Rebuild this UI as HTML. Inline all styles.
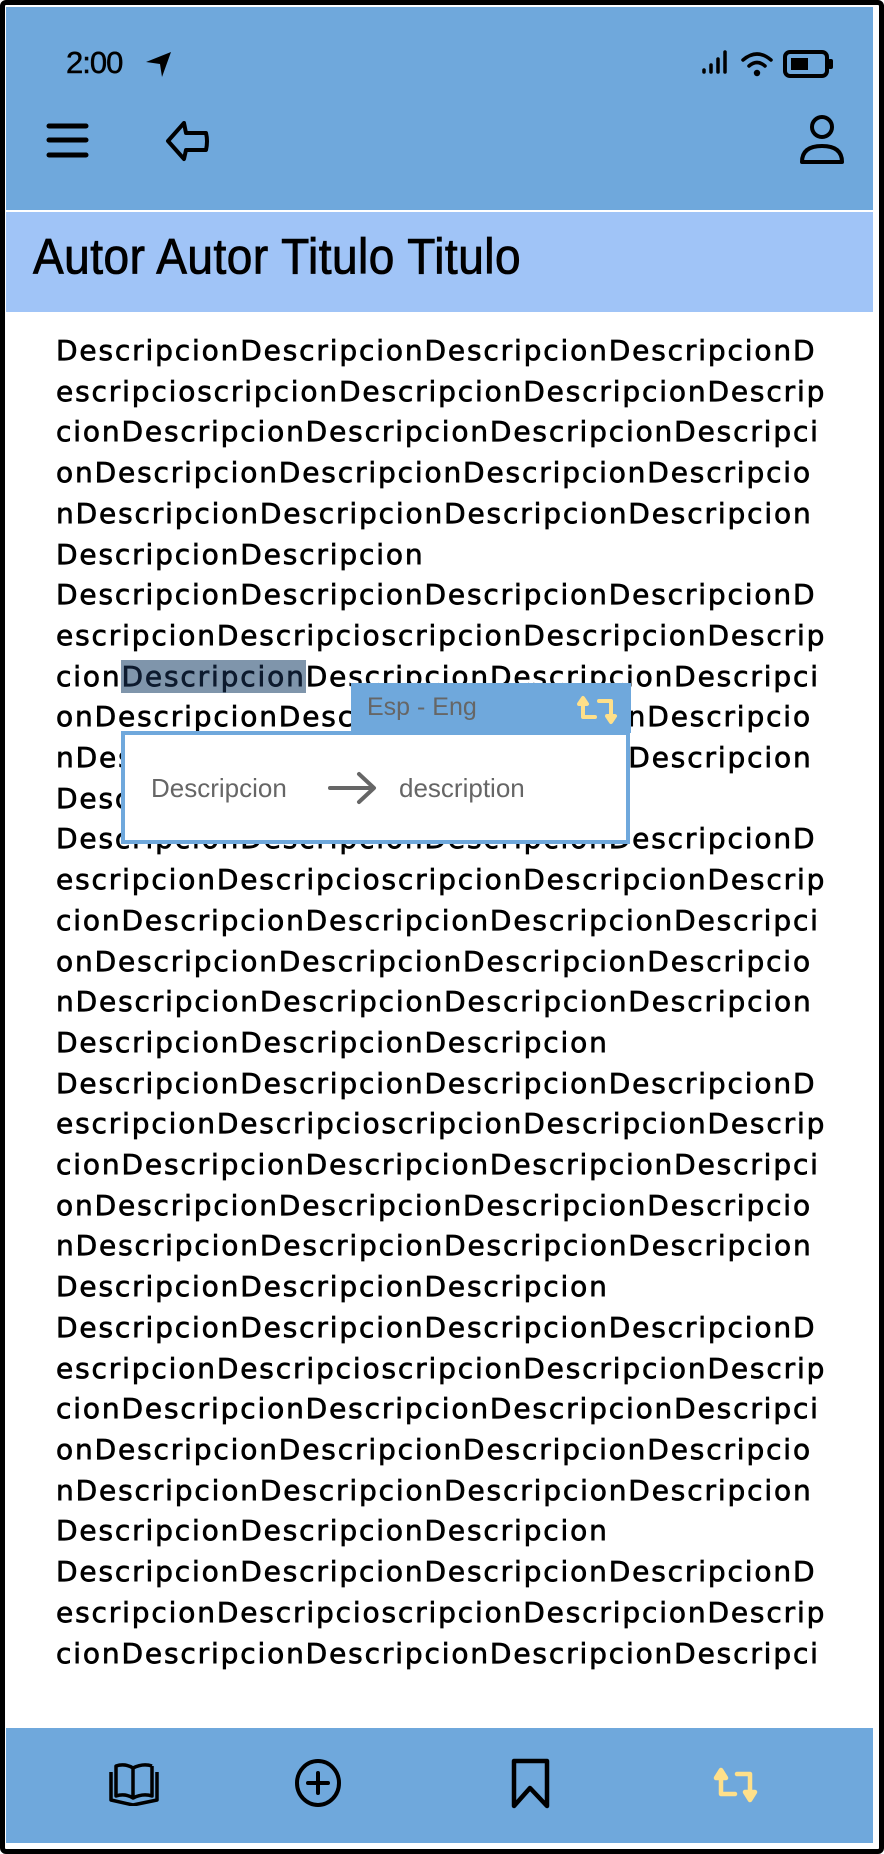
<!DOCTYPE html>
<html><head><meta charset="utf-8"><style>
*{margin:0;padding:0;box-sizing:border-box}
html,body{width:884px;height:1854px;background:#fff;overflow:hidden}
.frame{position:absolute;left:0;top:0;width:884px;height:1854px;border:5px solid #000;border-radius:6px;background:#fff}
.hdr{position:absolute;left:6px;top:7px;width:867px;height:203px;background:#6fa8dc}
.title{position:absolute;left:6px;top:212px;width:867px;height:100px;background:#a0c4f7}
.title span{position:absolute;left:27px;top:15px;font:46px "Liberation Sans",sans-serif;color:#000;letter-spacing:.5px;transform:scaleY(1.08);transform-origin:left top;-webkit-text-stroke:0.8px #000}
.time{position:absolute;left:66px;top:45px;font:31px "Liberation Sans",sans-serif;color:#000;letter-spacing:-1px;-webkit-text-stroke:0.5px #000}
.txt{position:absolute;left:56px;top:331px;font:28px "DejaVu Sans",sans-serif;letter-spacing:1.85px;line-height:40.7px;color:#000;white-space:nowrap;-webkit-text-stroke:0.7px #000}
.hl{background:#7f95ab;color:#0d1a2e;-webkit-text-stroke:0.7px #0d1a2e}
.tab{position:absolute;left:351px;top:683px;width:280px;height:50px;background:#6fa8dc}
.tab span{position:absolute;left:16px;top:10px;font:25px "Liberation Sans",sans-serif;color:#666}
.pop{position:absolute;left:121px;top:731px;width:509px;height:113px;background:#fff;border:4px solid #6fa8dc}
.pop .a{position:absolute;left:26px;top:38px;font:26px "Liberation Sans",sans-serif;color:#666}
.pop .b{position:absolute;left:274px;top:38px;font:26px "Liberation Sans",sans-serif;color:#666}
.bot{position:absolute;left:6px;top:1728px;width:867px;height:115px;background:#6fa8dc}
svg{position:absolute}
</style></head><body>
<div class="frame"></div>
<div class="hdr"></div>
<div class="time">2:00</div>
<svg style="left:144px;top:50px" width="30" height="28" viewBox="0 0 30 28"><path d="M2 12 L27 2 L18 27 L16 14 Z" fill="#000"/></svg>
<svg style="left:700px;top:48px" width="34" height="28" viewBox="0 0 34 28"><g stroke="#000" stroke-width="3.5" stroke-linecap="round"><line x1="4" y1="24" x2="4" y2="22"/><line x1="11" y1="24" x2="11" y2="17"/><line x1="18" y1="24" x2="18" y2="11"/><line x1="25" y1="24" x2="25" y2="4"/></g></svg>
<svg style="left:740px;top:50px" width="36" height="28" viewBox="0 0 36 28"><path d="M3 10 Q17 -2 31 10" stroke="#000" stroke-width="3.5" fill="none" stroke-linecap="round"/><path d="M9 16 Q17 9 25 16" stroke="#000" stroke-width="3.5" fill="none" stroke-linecap="round"/><circle cx="17" cy="23" r="3.2" fill="#000"/></svg>
<svg style="left:783px;top:50px" width="52" height="28" viewBox="0 0 52 28"><rect x="2" y="2" width="42" height="24" rx="5" fill="none" stroke="#000" stroke-width="4"/><rect x="8" y="8" width="17" height="12" fill="#000"/><rect x="45" y="9" width="5" height="10" rx="2" fill="#000"/></svg>
<svg style="left:46px;top:122px" width="46" height="38" viewBox="0 0 46 38"><g stroke="#000" stroke-width="5" stroke-linecap="round"><line x1="3" y1="4" x2="40" y2="4"/><line x1="3" y1="18" x2="40" y2="18"/><line x1="3" y1="33" x2="40" y2="33"/></g></svg>
<svg style="left:164px;top:120px" width="48" height="42" viewBox="0 0 48 42"><path d="M20 3 L4 21 L20 39 L22 30 L42 30 Q44 21 42 13 L22 13 Z" fill="none" stroke="#000" stroke-width="4" stroke-linejoin="round"/></svg>
<svg style="left:798px;top:114px" width="48" height="52" viewBox="0 0 48 52"><circle cx="24" cy="13" r="10" fill="none" stroke="#000" stroke-width="4"/><path d="M4 48 Q4 32 24 32 Q44 32 44 48 Z" fill="none" stroke="#000" stroke-width="4" stroke-linejoin="round"/></svg>
<div class="title"><span>Autor Autor Titulo Titulo</span></div>
<div class="txt">
DescripcionDescripcionDescripcionDescripcionD<br>
escripcioscripcionDescripcionDescripcionDescrip<br>
cionDescripcionDescripcionDescripcionDescripci<br>
onDescripcionDescripcionDescripcionDescripcio<br>
nDescripcionDescripcionDescripcionDescripcion<br>
DescripcionDescripcion<br>
DescripcionDescripcionDescripcionDescripcionD<br>
escripcionDescripcioscripcionDescripcionDescrip<br>
cion<span class="hl">Descripcion</span>DescripcionDescripcionDescripci<br>
onDescripcionDescripcionDescripcionDescripcio<br>
nDescripcionDescripcionDescripcionDescripcion<br>
DescripcionDescripcionDescripcion<br>
DescripcionDescripcionDescripcionDescripcionD<br>
escripcionDescripcioscripcionDescripcionDescrip<br>
cionDescripcionDescripcionDescripcionDescripci<br>
onDescripcionDescripcionDescripcionDescripcio<br>
nDescripcionDescripcionDescripcionDescripcion<br>
DescripcionDescripcionDescripcion<br>
DescripcionDescripcionDescripcionDescripcionD<br>
escripcionDescripcioscripcionDescripcionDescrip<br>
cionDescripcionDescripcionDescripcionDescripci<br>
onDescripcionDescripcionDescripcionDescripcio<br>
nDescripcionDescripcionDescripcionDescripcion<br>
DescripcionDescripcionDescripcion<br>
DescripcionDescripcionDescripcionDescripcionD<br>
escripcionDescripcioscripcionDescripcionDescrip<br>
cionDescripcionDescripcionDescripcionDescripci<br>
onDescripcionDescripcionDescripcionDescripcio<br>
nDescripcionDescripcionDescripcionDescripcion<br>
DescripcionDescripcionDescripcion<br>
DescripcionDescripcionDescripcionDescripcionD<br>
escripcionDescripcioscripcionDescripcionDescrip<br>
cionDescripcionDescripcionDescripcionDescripci
</div>
<div class="tab"><span>Esp - Eng</span>
<svg style="left:224px;top:12px" width="50" height="30" viewBox="0 0 50 30"><g fill="none" stroke="#ffe08a" stroke-width="4" stroke-linejoin="round" stroke-linecap="round"><path d="M8 6 L8 22 L20 22"/><path d="M4 9 L8 3 L12 9 Z"/><path d="M24 6 L36 6 L36 22"/><path d="M32 21 L36 27 L40 21 Z"/></g></svg>
</div>
<div class="pop"><span class="a">Descripcion</span>
<svg style="left:202px;top:36px" width="52" height="34" viewBox="0 0 52 34"><g fill="none" stroke="#666" stroke-width="4" stroke-linecap="round" stroke-linejoin="round"><line x1="3" y1="17" x2="46" y2="17"/><path d="M32 3 L47 17 L32 31"/></g></svg>
<span class="b">description</span></div>
<div class="bot"></div>
<svg style="left:108px;top:1760px" width="52" height="46" viewBox="0 0 52 46"><g fill="none" stroke="#000" stroke-width="3.5" stroke-linejoin="round"><path d="M8 6 Q17 3 25 8 L25 38 Q17 33 8 36 Z"/><path d="M44 6 Q35 3 25 8 M44 6 L44 36 Q35 33 25 38"/><path d="M3 12 L3 40 L25 45 L49 40 L49 12"/></g></svg>
<svg style="left:294px;top:1758px" width="50" height="50" viewBox="0 0 50 50"><ellipse cx="24" cy="25" rx="21" ry="22" fill="none" stroke="#000" stroke-width="4"/><g stroke="#000" stroke-width="4" stroke-linecap="round"><line x1="14" y1="25" x2="34" y2="25"/><line x1="24" y1="15" x2="24" y2="35"/></g></svg>
<svg style="left:510px;top:1758px" width="42" height="52" viewBox="0 0 42 52"><path d="M4 3 L37 3 L37 48 L20 30 L4 48 Z" fill="none" stroke="#000" stroke-width="4.5" stroke-linejoin="round"/></svg>
<svg style="left:710px;top:1764px" width="56" height="40" viewBox="0 0 56 40"><g fill="none" stroke="#ffe08a" stroke-width="4.5" stroke-linejoin="round" stroke-linecap="round"><path d="M11 10 L11 30 L25 30"/><path d="M6 14 L11 6 L16 14 Z"/><path d="M27 10 L40 10 L40 30"/><path d="M35 28 L40 36 L45 28 Z"/></g></svg>
</body></html>
